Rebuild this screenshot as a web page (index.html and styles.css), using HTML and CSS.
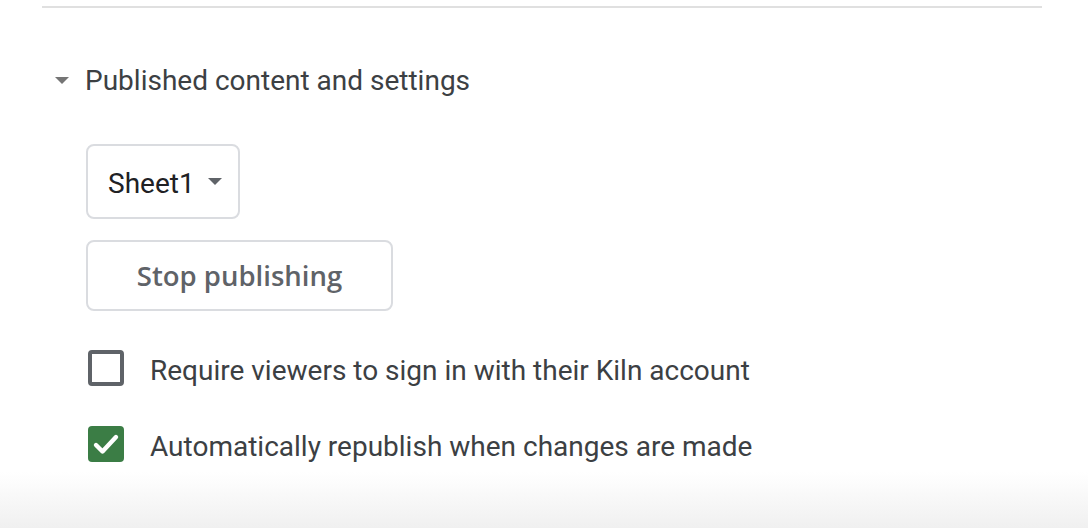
FILE: index.html
```html
<!DOCTYPE html>
<html>
<head>
<meta charset="utf-8">
<link rel="stylesheet" href="styles.css">
</head>
<body>
<div class="page">
  <div class="panel">
    <div class="divider"></div>
    <div class="section-head">
      <svg class="caret" width="14" height="7" viewBox="0 0 14 7"><path d="M0 0h14L7 7z" fill="#757575"/></svg>
      <span class="section-title">Published content and settings</span>
    </div>
    <div class="section-body">
      <div class="select">
        <span>Sheet1</span>
        <svg class="select-caret" width="14" height="7" viewBox="0 0 14 7"><path d="M0 0h14L7 7z" fill="#5f6368"/></svg>
      </div>
      <button class="btn">Stop publishing</button>
      <label class="check-row">
        <span class="box"></span>
        <span class="check-label">Require viewers to sign in with their Kiln account</span>
      </label>
      <label class="check-row">
        <span class="box checked">
          <svg width="36" height="36" viewBox="0 0 36 36"><path d="M8 19l6.5 6.5L28 11" fill="none" stroke="#fff" stroke-width="4.4" stroke-linecap="round" stroke-linejoin="round"/></svg>
        </span>
        <span class="check-label">Automatically republish when changes are made</span>
      </label>
    </div>
  </div>
  <div class="fade"></div>
</div>
</body>
</html>
```
FILE: styles.css
```css
html, body {
  margin: 0;
  padding: 0;
  background: #fff;
}
.page {
  width: 1088px;
  height: 528px;
  position: relative;
  overflow: hidden;
  font-family: Roboto, "Liberation Sans", sans-serif;
}
.panel {
  padding: 6px 0 0 42px;
  width: 1000px;
}
.divider {
  height: 2px;
  background: #e0e0e0;
}
.section-head {
  display: flex;
  align-items: center;
  height: 40px;
  margin-top: 52px;
}
.caret {
  margin-left: 13px;
  margin-right: 16px;
}
.section-title {
  font-size: 28px;
  color: #3c4043;
}
.section-body {
  display: flex;
  flex-direction: column;
  align-items: flex-start;
  padding-left: 44px;
  margin-top: 44px;
}
.select {
  box-sizing: border-box;
  height: 75px;
  width: 154px;
  border: 2px solid #dadce0;
  border-radius: 8px;
  display: flex;
  align-items: center;
  padding: 3px 0 0 20px;
  font-size: 28px;
  color: #202124;
}
.select-caret {
  margin-left: 13px;
  margin-top: -3px;
}
.btn {
  box-sizing: border-box;
  margin-top: 21px;
  height: 71px;
  width: 307px;
  border: 2px solid #dadce0;
  border-radius: 8px;
  background: #fff;
  font-family: "Open Sans", Roboto, sans-serif;
  font-weight: 600;
  font-size: 27.5px;
  color: #5f6368;
  padding: 0;
}
.check-row {
  display: flex;
  align-items: center;
  height: 38px;
  margin-top: 38px;
}
.box {
  box-sizing: border-box;
  flex: none;
  width: 36px;
  height: 36px;
  margin-left: 2px;
  border: 4px solid #5f6368;
  border-radius: 4px;
  display: flex;
  align-items: center;
  justify-content: center;
}
.box.checked {
  border: none;
  background: #3b7d45;
}
.check-label {
  margin-left: 26px;
  padding-top: 4px;
  font-size: 28px;
  color: #3c4043;
}
.fade {
  position: absolute;
  left: 0;
  right: 0;
  bottom: 0;
  height: 56px;
  background: linear-gradient(to bottom, rgba(240,240,240,0), #f0f0f0);
  pointer-events: none;
}
```
